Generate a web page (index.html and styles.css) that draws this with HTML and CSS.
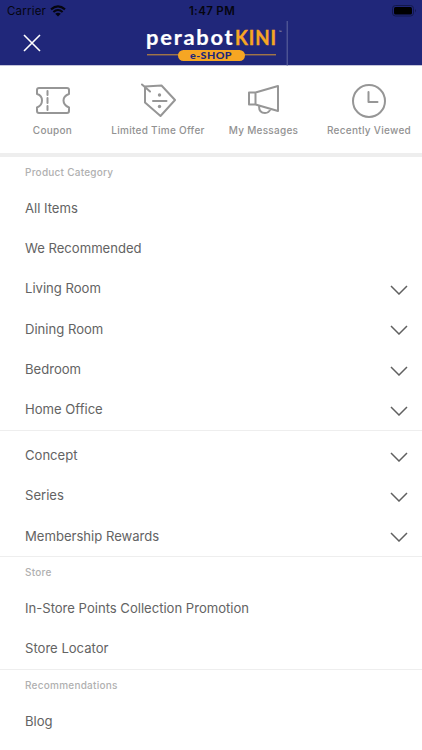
FILE: index.html
```html
<!DOCTYPE html>
<html lang="en">
<head>
<meta charset="utf-8">
<title>perabotKINI e-shop</title>
<link rel="stylesheet" href="styles.css">
</head>
<body>
<header class="header">
  <div class="status">
    <div class="carrier"><span>Carrier</span>
      <svg width="16" height="12" viewBox="0 0 16 12" fill="none" stroke="#05050f" stroke-width="2.1"><path d="M1 4.4Q8-1.8 15 4.4M3.4 7Q8 3 12.6 7"/><path d="M5.2 8.7Q8 6.7 10.8 8.7L8 11.5Z" fill="#05050f" stroke="none"/></svg>
    </div>
    <span class="time">1:47 PM</span>
    <svg class="battery" width="25" height="12" viewBox="0 0 25 12"><rect x=".5" y=".5" width="21" height="10.5" rx="3" fill="none" stroke="#13184b"/><rect x="2" y="2" width="18" height="7.5" rx="1.5" fill="#000"/><path d="M23 4q1.3 1.7 0 3.5z" fill="#0b0e33"/></svg>
  </div>
  <div class="titlebar">
    <svg class="close" width="18" height="18" viewBox="0 0 18 18" fill="none" stroke="#fff" stroke-width="1.6"><path d="M1 1L17 17M17 1L1 17"/></svg>
    <svg class="logo" width="142" height="46" viewBox="0 0 142 46">
      <g font-family="Lato, sans-serif" font-weight="700">
        <text x="0" y="23.5" font-size="20" fill="#fff" letter-spacing="1.6" textLength="88.500" lengthAdjust="spacingAndGlyphs" stroke="#fff" stroke-width=".2">perabot</text>
        <text x="89" y="23.500" font-size="20" fill="#f6a623" letter-spacing="1" textLength="42" lengthAdjust="spacingAndGlyphs" stroke="#f6a623" stroke-width=".4">KINI</text>
        <text x="133" y="12" font-size="3.5" fill="#ccc">™</text>
      </g>
      <path d="M1 33.800H130" stroke="#d99832" stroke-width="1"/>
      <rect x="32" y="29" width="67" height="11" rx="5.5" fill="#f6a623"/>
      <text x="44" y="38" font-family="Lato, sans-serif" font-weight="900" font-size="10" fill="#20277a" letter-spacing=".4" textLength="42" lengthAdjust="spacingAndGlyphs">e-SHOP</text>
      <path d="M141.2 0V45" stroke="#7378a9" stroke-width=".8"/>
    </svg>
  </div>
</header>
<nav class="shortcuts">
  <a class="shortcut coupon"><svg width="36" height="36" viewBox="0 0 36 36"><path d="M4 5H32Q34 5 34 7V11Q28.5 13 28.5 17.5T34 24.500V28Q34 30 32 30H4Q2 30 2 28V24.500Q7 22.500 7 17.500T2 11V7Q2 5 4 5Z"/><path d="M12.500 8V12M12.500 15V20M12.500 23V27"/></svg><span>Coupon</span></a>
  <a class="shortcut offer"><svg width="36" height="36" viewBox="0 0 36 36"><path d="M5 3.500L21.500 2.500L35 17L20.500 33L5 19.500ZM2 1.500L10 8.500M13 18H26.500"/><circle class="dot" cx="19.500" cy="12" r="1.700"/><circle class="dot" cx="19.500" cy="23.500" r="1.700"/></svg><span>Limited Time Offer</span></a>
  <a class="shortcut messages"><svg width="36" height="36" viewBox="0 0 36 36"><path d="M3 9.500H9.500V21.500H3ZM9.500 9.500L32 3V28L9.500 21.500M13 23Q13 30 19 30Q23 30 24.500 26"/></svg><span>My Messages</span></a>
  <a class="shortcut viewed"><svg width="36" height="36" viewBox="0 0 36 36"><circle cx="18" cy="18" r="16"/><path d="M17.500 9V19H26.500"/></svg><span>Recently Viewed</span></a>
</nav>
<main class="menu">
  <section>
    <h2>Product Category</h2>
    <a class="item">All Items</a>
    <a class="item">We Recommended</a>
    <a class="item more">Living Room<svg class="chevron" viewBox="0 0 18 10"><path d="M1 1L9 9L17 1"/></svg></a>
    <a class="item more">Dining Room<svg class="chevron" viewBox="0 0 18 10"><path d="M1 1L9 9L17 1"/></svg></a>
    <a class="item more">Bedroom<svg class="chevron" viewBox="0 0 18 10"><path d="M1 1L9 9L17 1"/></svg></a>
    <a class="item more">Home Office<svg class="chevron" viewBox="0 0 18 10"><path d="M1 1L9 9L17 1"/></svg></a>
  </section>
  <section class="untitled">
    <a class="item more">Concept<svg class="chevron" viewBox="0 0 18 10"><path d="M1 1L9 9L17 1"/></svg></a>
    <a class="item more">Series<svg class="chevron" viewBox="0 0 18 10"><path d="M1 1L9 9L17 1"/></svg></a>
    <a class="item more">Membership Rewards<svg class="chevron" viewBox="0 0 18 10"><path d="M1 1L9 9L17 1"/></svg></a>
  </section>
  <section>
    <h2>Store</h2>
    <a class="item">In-Store Points Collection Promotion</a>
    <a class="item">Store Locator</a>
  </section>
  <section>
    <h2>Recommendations</h2>
    <a class="item">Blog</a>
  </section>
</main>
</body>
</html>
```

FILE: styles.css
```css
* { box-sizing: border-box; }
body { margin: 0; height: 750px; overflow: hidden; background: #fff; font-family: Inter, sans-serif; color: #636363; }
.header { height: 66px; background: #20277a; border-bottom: 1px solid #c4c4da; }
.status { display: grid; grid-template-columns: 1fr auto 1fr; align-items: center; height: 21px; padding: 0 5px 0 7px; color: #05050f; font-size: 11.5px; }
.carrier { display: flex; align-items: center; gap: 4px; letter-spacing: .2px; }
.time { font-weight: 600; letter-spacing: .35px; }
.battery { justify-self: end; }
.titlebar { display: flex; height: 44px; padding-left: 23px; }
.close { margin-top: 13px; }
.logo { margin-left: 105px; }
.shortcuts { display: grid; grid-template-columns: 105px 106px 105px 106px; height: 91px; padding-top: 17px; border-bottom: 4px solid #eee; }
.shortcut { display: flex; flex-direction: column; align-items: center; gap: 4px; color: #929292; font-size: 10px; font-weight: 500; line-height: 14px; letter-spacing: .28px; white-space: nowrap; }
.shortcut svg { fill: none; stroke: #969696; stroke-width: 2; stroke-linejoin: round; stroke-linecap: round; }
.shortcut .dot { fill: #969696; stroke: none; }
section { border-bottom: 1px solid #eee; padding-bottom: .5px; }
section:last-child { border: 0; }
.untitled { padding-top: 3.8px; }
h2 { margin: 0; height: 30.4px; padding-left: 25px; line-height: 31px; font-size: 10px; font-weight: 500; letter-spacing: .25px; color: #b0b0b0; }
.item { display: flex; align-items: center; justify-content: space-between; height: 40.36px; padding: 0 14px 0 25px; font-size: 13.1px; letter-spacing: -.01px; }
.chevron { width: 18px; height: 10px; margin-top: 3px; fill: none; stroke: #606060; stroke-width: 1.5; }
```
